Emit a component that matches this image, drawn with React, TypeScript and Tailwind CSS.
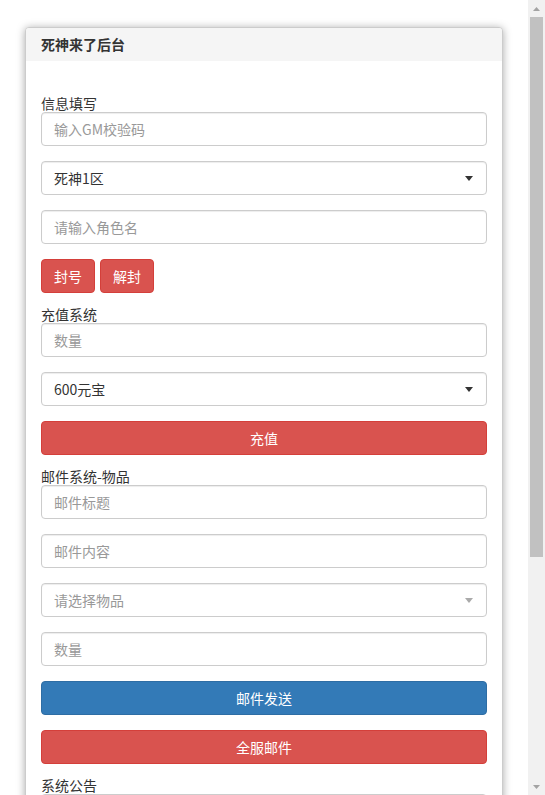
import React from "react";

const font = { fontFamily: '"Noto Sans CJK SC", "Liberation Sans", sans-serif' };

function Field({ placeholder }: { placeholder: string }) {
  return (
    <input
      className="block h-[34px] w-full rounded-[4px] border border-[#ccc] bg-white px-[12px] text-[14px] text-[#555] shadow-[inset_0_1px_1px_rgba(0,0,0,0.075)] outline-none placeholder:text-[#999]"
      placeholder={placeholder}
    />
  );
}

function Select({ value, muted }: { value: string; muted?: boolean }) {
  return (
    <div className="relative">
      <select
        className={`block h-[34px] w-full appearance-none rounded-[4px] border border-[#ccc] bg-white px-[12px] text-[14px] shadow-[inset_0_1px_1px_rgba(0,0,0,0.075)] outline-none ${
          muted ? "text-[#999]" : "text-[#333]"
        }`}
        defaultValue={value}
      >
        <option value={value}>{value}</option>
      </select>
      <svg
        className="pointer-events-none absolute right-[14px] top-[15px]"
        width="8"
        height="5"
        viewBox="0 0 8 5"
      >
        <path d="M0 0H8L4 5Z" fill={muted ? "#aaa" : "#333"} />
      </svg>
    </div>
  );
}

function Btn({ children, color, full }: { children: React.ReactNode; color: "red" | "blue"; full?: boolean }) {
  const c =
    color === "red"
      ? "bg-[#d9534f] border-[#d43f3a]"
      : "bg-[#337ab7] border-[#2e6da4]";
  return (
    <button
      className={`h-[34px] rounded-[4px] border px-[12px] text-[14px] text-white ${c} ${full ? "block w-full" : ""}`}
    >
      {children}
    </button>
  );
}

function Label({ children, className = "" }: { children: React.ReactNode; className?: string }) {
  return <label className={`block h-[18px] text-[14px] leading-[18px] text-[#333] ${className}`}>{children}</label>;
}

// classic scrollbar look, drawn as a column next to the page
function ScrollBar() {
  return (
    <div className="flex w-[17px] shrink-0 flex-col bg-[#f1f1f1]">
      <div className="flex h-[17px] items-center justify-center">
        <svg width="7" height="4" viewBox="0 0 7 4">
          <path d="M0 4H7L3.5 0Z" fill="#a3a3a3" />
        </svg>
      </div>
      <div className="mx-[2px] h-[540px] bg-[#c1c1c1]" />
      <div className="flex-1" />
      <div className="flex h-[17px] items-center justify-center">
        <svg width="7" height="4" viewBox="0 0 7 4">
          <path d="M0 0H7L3.5 4Z" fill="#a3a3a3" />
        </svg>
      </div>
    </div>
  );
}

export default function App() {
  return (
    <div className="flex h-screen bg-white" style={font}>
      <div className="flex-1 overflow-y-auto [scrollbar-width:none]">
        <div className="px-[25px] pt-[27px] pb-[30px]">
          <div className="rounded-[4px] border border-[#ccc] bg-white shadow-[0_1px_8px_rgba(0,0,0,0.35)]">
            <div className="flex h-[33px] items-center rounded-t-[3px] bg-[#f5f5f5] px-[15px] text-[14px] font-bold text-[#333]">
              死神来了后台
            </div>
            <div className="px-[15px] pt-[33px] pb-[15px]">
              {/* 信息填写 */}
              <Label>信息填写</Label>
              <div className="flex flex-col gap-[15px]">
                <Field placeholder="输入GM校验码" />
                <Select value="死神1区" />
                <Field placeholder="请输入角色名" />
                <div className="flex gap-[5px]">
                  <Btn color="red">封号</Btn>
                  <Btn color="red">解封</Btn>
                </div>
              </div>

              {/* 充值系统 */}
              <Label className="mt-[12px]">充值系统</Label>
              <div className="flex flex-col gap-[15px]">
                <Field placeholder="数量" />
                <Select value="600元宝" />
                <Btn color="red" full>
                  充值
                </Btn>
              </div>

              {/* 邮件系统 */}
              <Label className="mt-[12px]">邮件系统-物品</Label>
              <div className="flex flex-col gap-[15px]">
                <Field placeholder="邮件标题" />
                <Field placeholder="邮件内容" />
                <Select value="请选择物品" muted />
                <Field placeholder="数量" />
                <Btn color="blue" full>
                  邮件发送
                </Btn>
                <Btn color="red" full>
                  全服邮件
                </Btn>
              </div>

              {/* 系统公告 */}
              <Label className="mt-[12px]">系统公告</Label>
              <div className="flex flex-col gap-[15px]">
                <Field placeholder="公告内容" />
                <Btn color="blue" full>
                  发送公告
                </Btn>
              </div>
            </div>
          </div>
        </div>
      </div>
      <ScrollBar />
    </div>
  );
}
